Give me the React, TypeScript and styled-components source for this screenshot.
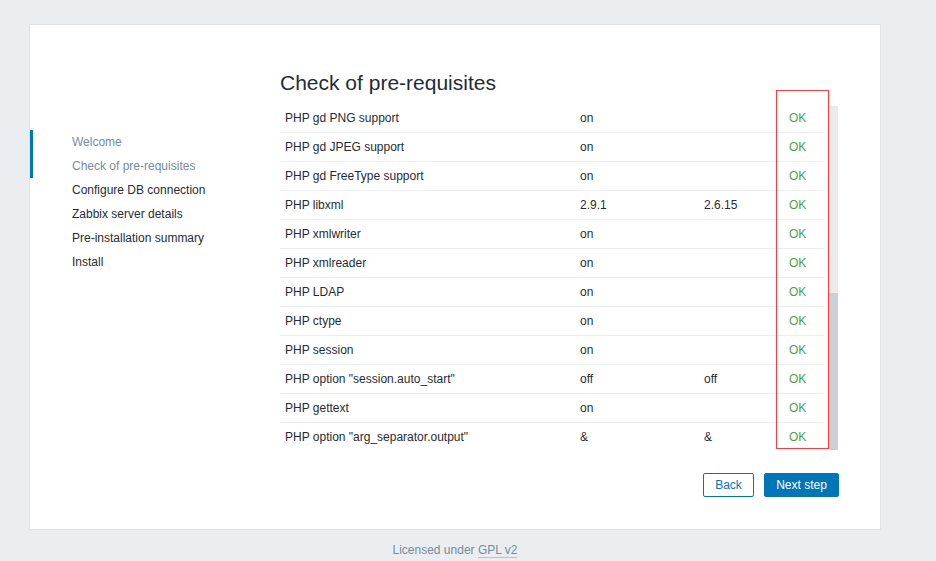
import styled, { createGlobalStyle } from 'styled-components'

const GlobalStyle = createGlobalStyle`
  body {
    margin: 0;
    background: #ebeef0;
    font-family: Arial, "Liberation Sans", sans-serif;
    font-size: 12px;
    color: #1f2c33;
  }
`

const STEPS = [
  { label: 'Welcome', done: true },
  { label: 'Check of pre-requisites', done: true },
  { label: 'Configure DB connection', done: false },
  { label: 'Zabbix server details', done: false },
  { label: 'Pre-installation summary', done: false },
  { label: 'Install', done: false }
]

const CHECKS: [string, string, string][] = [
  ['PHP gd PNG support', 'on', ''],
  ['PHP gd JPEG support', 'on', ''],
  ['PHP gd FreeType support', 'on', ''],
  ['PHP libxml', '2.9.1', '2.6.15'],
  ['PHP xmlwriter', 'on', ''],
  ['PHP xmlreader', 'on', ''],
  ['PHP LDAP', 'on', ''],
  ['PHP ctype', 'on', ''],
  ['PHP session', 'on', ''],
  ['PHP option "session.auto_start"', 'off', 'off'],
  ['PHP gettext', 'on', ''],
  ['PHP option "arg_separator.output"', '&', '&']
]

export default function App() {
  return (
    <>
      <GlobalStyle />
      <Page>
        <Card>
          <Sidebar>
            {STEPS.map((step) => (
              <Step key={step.label} $done={step.done}>
                {step.label}
              </Step>
            ))}
          </Sidebar>
          <Main>
            <Title>Check of pre-requisites</Title>
            <TableArea>
              <Table>
                <tbody>
                  {CHECKS.map(([name, current, required]) => (
                    <tr key={name}>
                      <NameCell>{name}</NameCell>
                      <ValueCell>{current}</ValueCell>
                      <RequiredCell>{required}</RequiredCell>
                      <StatusCell>OK</StatusCell>
                    </tr>
                  ))}
                </tbody>
              </Table>
              <Track>
                <Thumb />
              </Track>
              <Highlight />
            </TableArea>
            <Buttons>
              <BackButton>Back</BackButton>
              <NextButton>Next step</NextButton>
            </Buttons>
          </Main>
        </Card>
        <Footer>
          Licensed under <FooterLink>GPL v2</FooterLink>
        </Footer>
      </Page>
    </>
  )
}

const Page = styled.div`
  width: 852px;
  margin-left: 29px;
  padding-top: 24px;
`

const Card = styled.div`
  box-sizing: border-box;
  width: 852px;
  height: 506px;
  display: flex;
  background: #ffffff;
  border: 1px solid #dfe4e7;
`

const Sidebar = styled.ul`
  width: 250px;
  flex-shrink: 0;
  list-style: none;
  margin: 0;
  padding: 105px 0 0;
`

const Step = styled.li<{ $done: boolean }>`
  height: 24px;
  line-height: 24px;
  padding-left: 39px;
  border-left: 3px solid ${({ $done }) => ($done ? '#0275b8' : 'transparent')};
  color: ${({ $done }) => ($done ? '#768d99' : '#1f2c33')};
  white-space: nowrap;
`

const Main = styled.div`
  flex: 1;
  padding: 46px 41px 0 0;
  display: flex;
  flex-direction: column;
`

const Title = styled.h1`
  margin: 0 0 9px;
  font-size: 21px;
  font-weight: normal;
  line-height: 24px;
  color: #1f2c33;
`

const TableArea = styled.div`
  position: relative;
  display: flex;
  gap: 5px;
  height: 346px;
`

const Table = styled.table`
  width: 544px;
  border-collapse: collapse;
  table-layout: fixed;
  align-self: flex-start;

  td {
    height: 28px;
    padding: 0 5px;
    border-bottom: 1px solid #ebeef0;
    white-space: nowrap;
  }

  tr:last-child td {
    border-bottom: none;
  }
`

const NameCell = styled.td`
  width: 285px;
`

const ValueCell = styled.td`
  width: 114px;
`

const RequiredCell = styled.td`
  width: 75px;
`

const StatusCell = styled.td`
  color: #4a9f4f;
`

const Track = styled.div`
  width: 9px;
  margin-top: 2px;
  background: #ebebeb;
  display: flex;
  flex-direction: column;
  justify-content: flex-end;
`

const Thumb = styled.div`
  height: 157px;
  background: #c9d1d7;
`

const Highlight = styled.div`
  position: absolute;
  left: 496px;
  top: -14px;
  width: 53px;
  height: 359px;
  box-sizing: border-box;
  border: 1px solid #ff3b3b;
  pointer-events: none;
`

const Buttons = styled.div`
  display: flex;
  justify-content: flex-end;
  gap: 10px;
  margin-top: 23px;
`

const Button = styled.button`
  box-sizing: border-box;
  height: 24px;
  padding: 0 11px;
  border-radius: 2px;
  font-family: Arial, "Liberation Sans", sans-serif;
  font-size: 12px;
  line-height: 22px;
  cursor: pointer;
`

const BackButton = styled(Button)`
  width: 51px;
  background: #ffffff;
  border: 1px solid #0275b8;
  color: #0275b8;
`

const NextButton = styled(Button)`
  width: 75px;
  background: #0275b8;
  border: 1px solid #0275b8;
  color: #ffffff;
`

const Footer = styled.div`
  margin-top: 12px;
  text-align: center;
  line-height: 16px;
  color: #768d99;
`

const FooterLink = styled.span`
  border-bottom: 1px solid #b7c3ca;
`
